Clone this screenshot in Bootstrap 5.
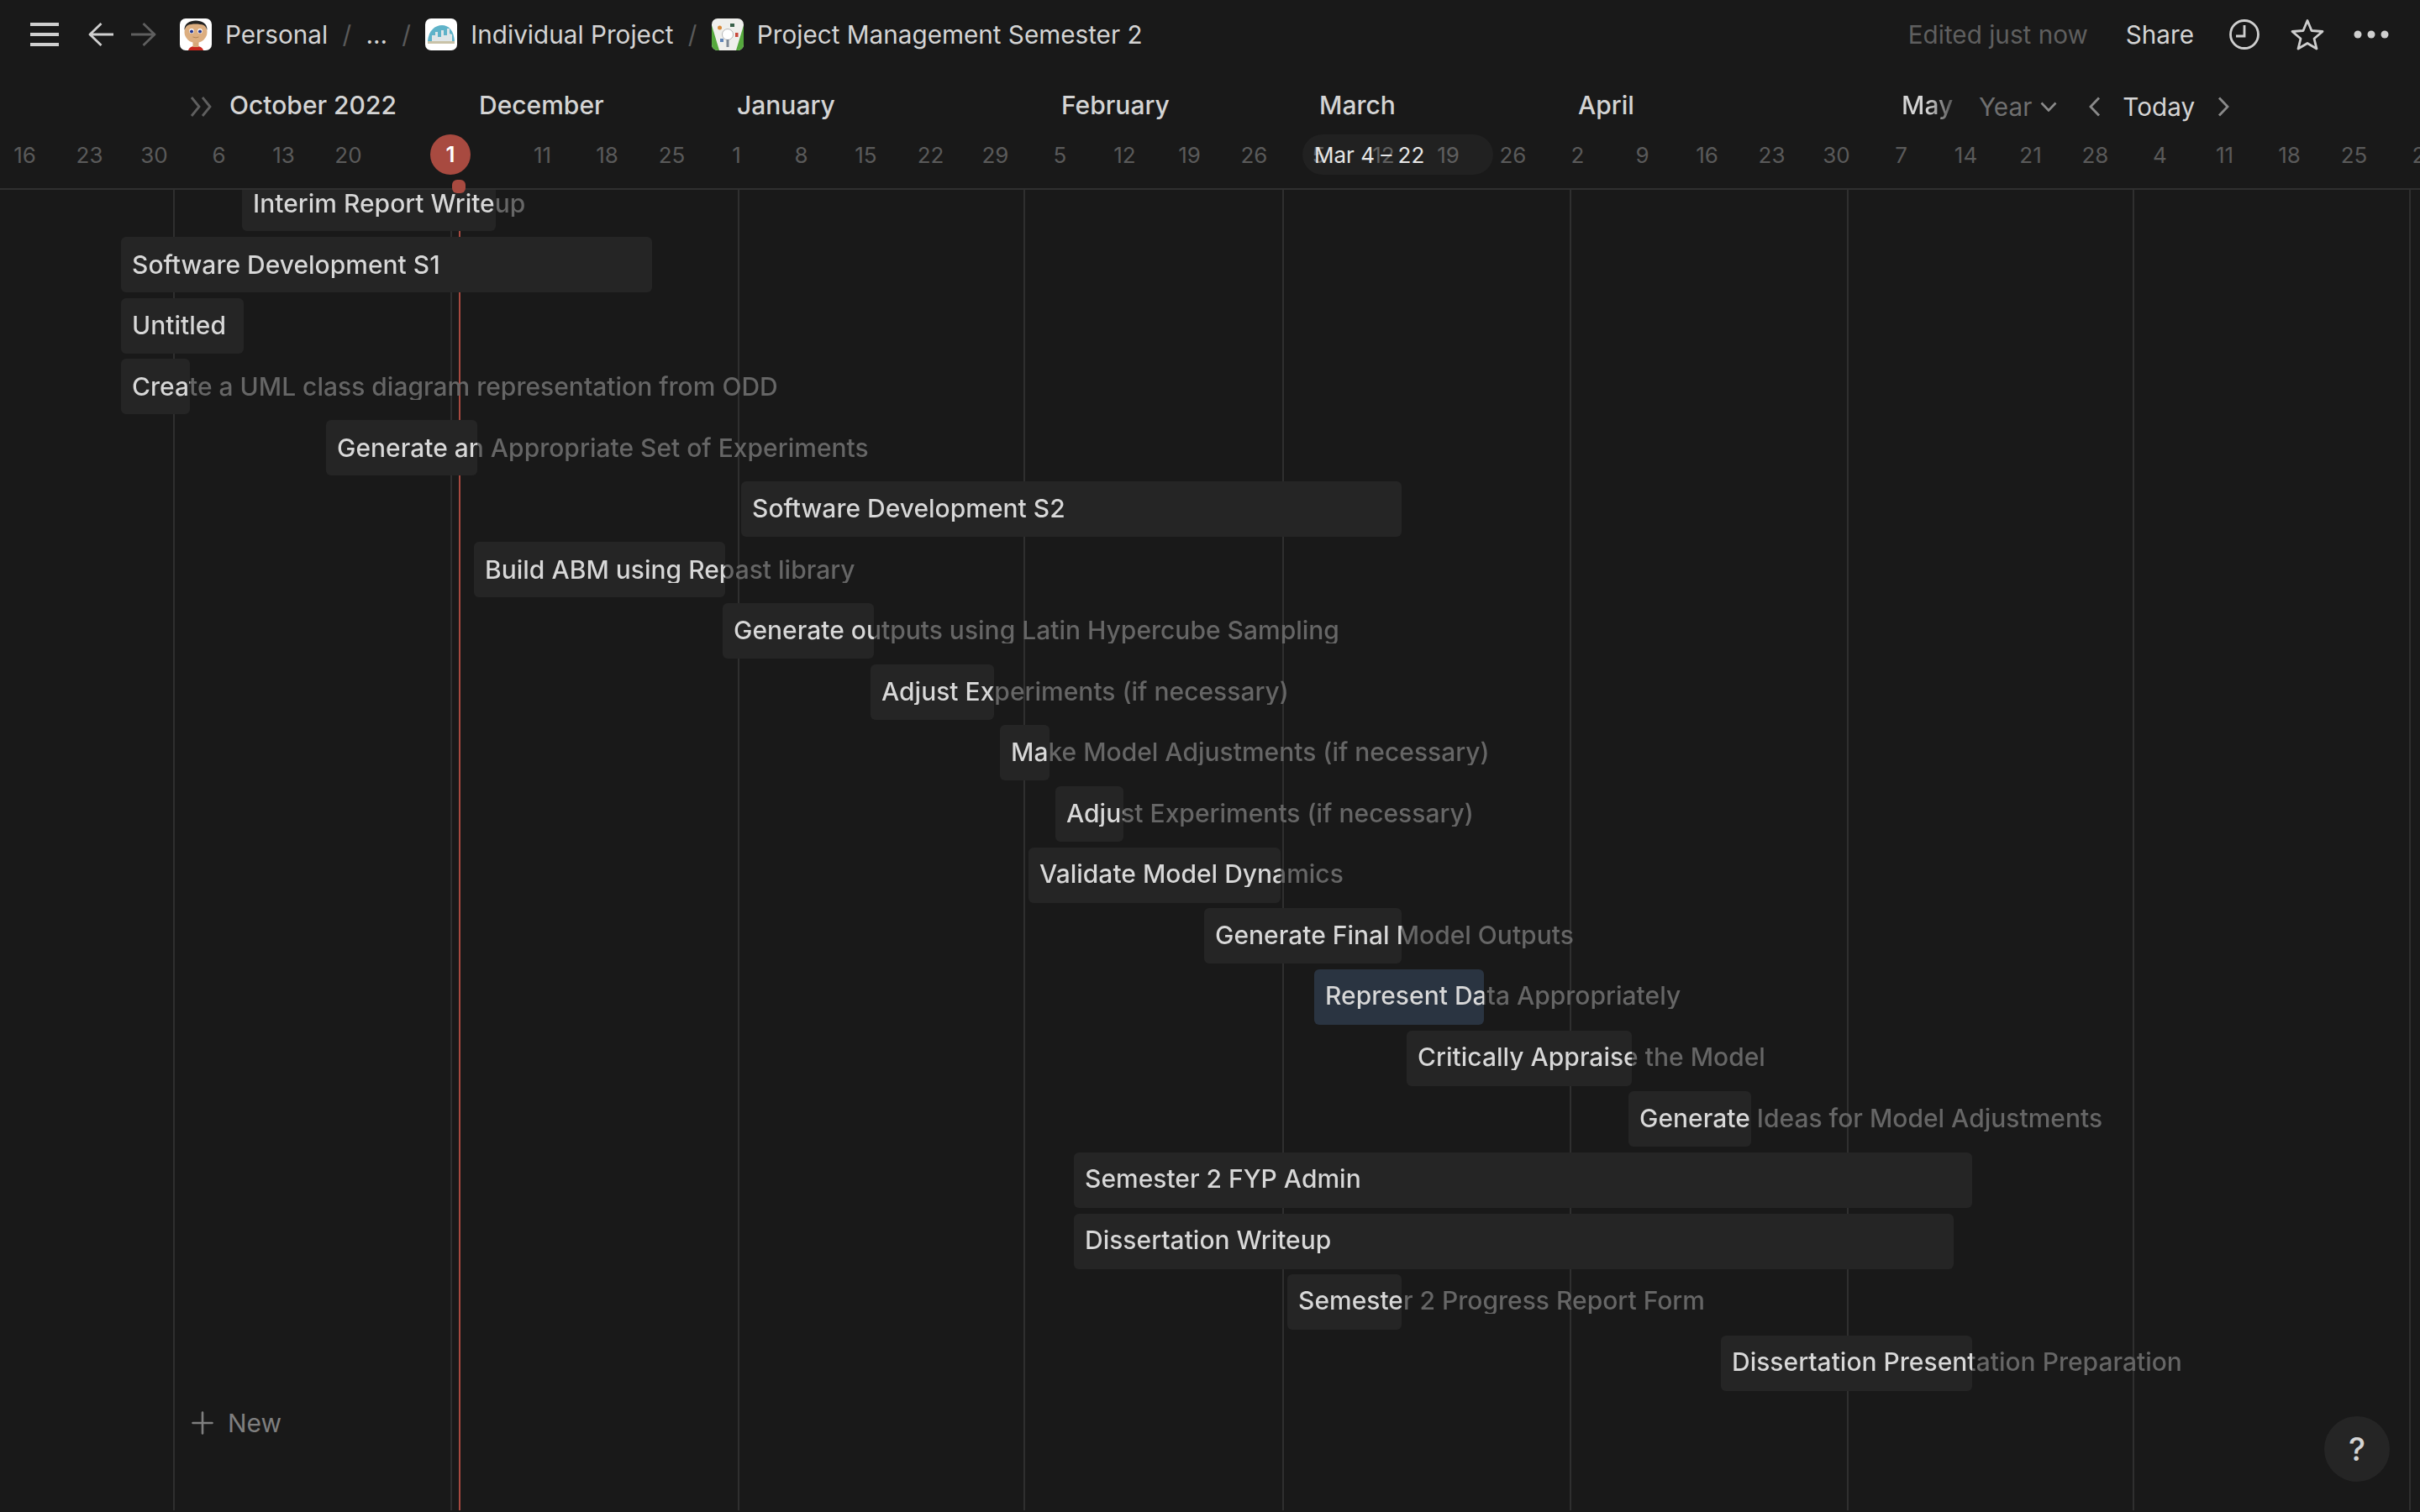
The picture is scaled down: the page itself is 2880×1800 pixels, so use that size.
<!DOCTYPE html>
<html lang="en">

<head>
    <meta charset="UTF-8">
    <meta name="viewport" content="width=device-width, initial-scale=1.0">
    <title>Project Management Semester 2</title>
    <link href="https://cdn.jsdelivr.net/npm/bootstrap@5.3.2/dist/css/bootstrap.min.css" rel="stylesheet">
    <style>
        html, body { height: 100%; }
        body {
            background: #191919;
            color: #d4d4d4;
            font-family: Inter, "Liberation Sans", sans-serif;
            font-size: 29.7px;
            overflow: hidden;
        }
        .app-shell { position: relative; width: 2880px; height: 1798px; overflow: hidden; }
        /* top bar */
        .topbar { height: 82px; padding-left: 36px; padding-right: 37px; }
        .topbar svg { display: block; flex: none; }
        .crumb-icon { width: 38px; height: 38px; border-radius: 7px; overflow: hidden; flex: none; }
        .crumb-sep { color: #5a5a5a; margin: 0 17.25px; }
        .crumb-text { margin-left: 16px; white-space: nowrap; }
        .edited { color: #5f5f5f; margin-right: 45px; white-space: nowrap; }
        .gap-hamb { margin-left: 35px; }
        .gap-fwd { margin-left: 21px; }
        .gap-avatar { margin-left: 28px; }
        .gap-share { margin-right: 42px; }
        .gap-star { margin-left: 37px; }
        .gap-dots { margin-left: 35px; }
        /* months and dates */
        .tl-head { position: relative; z-index: 2; height: 144px; border-bottom: 2px solid #2f2f2f; background: #191919; }
        .skip-back { left: 226px; top: 33px; }
        .month-label { position: absolute; top: 24px; font-weight: 500; font-size: 30px; line-height: 38px; color: #d4d4d4; white-space: nowrap; }
        .month-fade {
            background: linear-gradient(90deg, #d4d4d4 30px, #5f5f5f 58px);
            -webkit-background-clip: text;
            background-clip: text;
            color: transparent;
        }
        .tl-controls { position: absolute; top: 24px; left: 2355px; height: 42px; }
        .tl-controls .ctl-year { color: #6f6f6f; }
        .tl-controls .ctl-today { color: #d4d4d4; margin-left: 25px; }
        .gap-chev1 { margin-left: 10px; }
        .gap-chev2 { margin-left: 37px; }
        .gap-chev3 { margin-left: 26px; }
        .date-row { position: absolute; top: 79px; left: -9px; height: 48px; }
        .date-cell { width: 77px; text-align: center; font-size: 26px; line-height: 48px; color: #5a5a5a; flex: none; }
        .today-dot { position: absolute; top: 78px; left: 512px; width: 48px; height: 48px; border-radius: 50%; background: #a84a40; color: #fff; font-size: 26px; font-weight: 600; line-height: 48px; text-align: center; }
        .today-tick { position: absolute; top: 132px; left: 538px; width: 16px; height: 16px; border-radius: 6px; background: #a84a40; z-index: 5; }
        .range-pill { position: absolute; top: 78px; left: 1550px; width: 227px; height: 48px; border-radius: 24px; background: rgba(255, 255, 255, .035); color: #e6e6e6; font-size: 26px; line-height: 50px; padding-left: 14px; white-space: nowrap; }
        /* canvas */
        .tl-canvas { position: relative; height: 1572px; }
        .grid-line { position: absolute; top: 0; bottom: 0; width: 2px; background: #2f2f2f; }
        .now-line { position: absolute; top: 0; bottom: 0; left: 546px; width: 2px; background: #a84a40; }
        .gantt-bar { position: absolute; height: 66px; border-radius: 6px; background: #252525; }
        .gantt-bar.is-active { background: #2a3441; }
        .gantt-label {
            position: absolute;
            height: 32px;
            line-height: 32px;
            font-weight: 500;
            font-size: 30px;
            white-space: nowrap;
            background: linear-gradient(90deg, #d8d8d8 var(--cut), #666 var(--cut));
            -webkit-background-clip: text;
            background-clip: text;
            color: transparent;
        }
        .new-row { position: absolute; left: 228px; top: 1448px; color: #7f7f7f; font-size: 30px; line-height: 40px; gap: 17px; }
        .help-btn { position: absolute; left: 2766px; top: 1686px; width: 78px; height: 78px; border-radius: 50%; background: #252525; color: #d4d4d4; font-size: 38px; font-weight: 500; z-index: 6; }
    </style>
</head>

<body>
    <div class="app-shell">
        <!-- Barre du haut -->
        <div class="topbar d-flex align-items-center">
            <svg width="34" height="28" viewBox="0 0 34 28" fill="#cfcfcf"><rect width="34" height="4"/><rect y="12" width="34" height="4"/><rect y="24" width="34" height="4"/></svg>
            <svg class="gap-hamb" width="30" height="28" viewBox="0 0 30 28" fill="none" stroke="#cfcfcf" stroke-width="2.800" stroke-linejoin="round"><path d="M30 14H2M15.500 1 2 14l13.500 13"/></svg>
            <svg class="gap-fwd" width="30" height="28" viewBox="0 0 30 28" fill="none" stroke="#5f5f5f" stroke-width="2.800" stroke-linejoin="round"><path d="M0 14H28M14.500 1 28 14 14.500 27"/></svg>

            <div class="crumb-icon gap-avatar">
                <svg width="38" height="38" viewBox="0 0 38 38"><rect width="38" height="38" fill="#fff"/><path d="M10 38q1-4 6-5h6q5 1 6 5z" fill="#c8281e"/><rect x="15.500" y="24" width="7" height="10" fill="#d8a878"/><ellipse cx="19" cy="16" rx="13.500" ry="13" fill="#dcae80"/><path d="M5.500 14C5 6 12 2.500 19 2.500S33 6 32.500 14c-1-3-2-5-4-6-5-2-15-2-19 0-2 1-3 3-4 6z" fill="#222"/><ellipse cx="14" cy="15" rx="2.800" ry="3" fill="#fff"/><ellipse cx="24" cy="15" rx="2.800" ry="3" fill="#fff"/><circle cx="14" cy="15.500" r="2" fill="#23358f"/><circle cx="24" cy="15.500" r="2" fill="#23358f"/><path d="M15.500 22q3.500 1.800 7 0" stroke="#b08558" fill="none"/></svg>
            </div>
            <span class="crumb-text">Personal</span>
            <span class="crumb-sep">/</span>
            <span>...</span>
            <span class="crumb-sep">/</span>
            <div class="crumb-icon">
                <svg width="38" height="38" viewBox="0 0 38 38"><rect width="38" height="38" fill="#fff"/><path d="M3 27C4 14 12 8 20 8s14 6 15 19z" fill="#5fb3c9"/><path d="M8 27v-7h4v-4h3v6h4v-8h3v6h4v-8h3v6l3 1v8z" fill="#dfe6e8"/><path d="M3 27h32v3H3z" fill="#c9c2a8"/></svg>
            </div>
            <span class="crumb-text">Individual Project</span>
            <span class="crumb-sep">/</span>
            <div class="crumb-icon">
                <svg width="38" height="38" viewBox="0 0 38 38"><rect width="38" height="38" fill="#efefec"/><path d="M0 8 9 38H0zM38 8 29 38h9z" fill="#55a83d"/><circle cx="19" cy="19" r="6.500" fill="#fff" stroke="#b5b5b5"/><rect x="17.500" y="25" width="3" height="9" fill="#7c8794"/><circle cx="9.500" cy="11" r="2.500" fill="#d98a3a"/><rect x="22" y="6" width="5" height="4" fill="#39604a"/><rect x="28" y="17" width="3.500" height="5" fill="#c8483a"/><rect x="10" y="24" width="4" height="4" fill="#5f84b8"/></svg>
            </div>
            <span class="crumb-text">Project Management Semester 2</span>

            <div class="ms-auto d-flex align-items-center">
                <span class="edited">Edited just now</span>
                <span class="text-nowrap gap-share">Share</span>
                <svg width="36" height="36" viewBox="0 0 36 36" fill="none" stroke="#cfcfcf" stroke-width="2.800"><circle cx="18" cy="18" r="16.500"/><path d="M18 7v13H8"/></svg>
                <svg class="gap-star" width="40" height="38" viewBox="0 0 40 38" fill="none" stroke="#cfcfcf" stroke-width="2.800" stroke-linejoin="round"><path d="M20 2.500 25 14.500 38 15.500 28 24 31 36 20 29.500 9 36 12 24 2 15.500 15 14.500z"/></svg>
                <svg class="gap-dots" width="42" height="10" viewBox="0 0 42 10" fill="#cfcfcf"><circle cx="5" cy="5" r="4.500"/><circle cx="21" cy="5" r="4.500"/><circle cx="37" cy="5" r="4.500"/></svg>
            </div>
        </div>

        <!-- Mois et dates -->
        <div class="tl-head">
            <svg class="position-absolute skip-back" width="28" height="24" viewBox="0 0 28 24" fill="none" stroke="#5f5f5f" stroke-width="2.800"><path d="M2 1l9 11-9 11M15 1l9 11-9 11"/></svg>
            <div id="monthLabels"></div>
            <div class="tl-controls d-flex align-items-center">
                <span class="ctl-year">Year</span>
                <svg class="gap-chev1" width="20" height="12" viewBox="0 0 20 12" fill="none" stroke="#8a8a8a" stroke-width="2.600"><path d="M1.500 1.500 10 10.500l8.500-9"/></svg>
                <svg class="gap-chev2" width="16" height="24" viewBox="0 0 16 24" fill="none" stroke="#8a8a8a" stroke-width="2.800"><path d="M13 1.500 3 12l10 10.500"/></svg>
                <span class="ctl-today">Today</span>
                <svg class="gap-chev3" width="16" height="24" viewBox="0 0 16 24" fill="none" stroke="#8a8a8a" stroke-width="2.800"><path d="M3 1.500 13 12 3 22.500"/></svg>
            </div>
            <div class="date-row d-flex" id="dateRow"></div>
            <div class="today-dot">1</div>
            <div class="today-tick"></div>
            <div class="range-pill">Mar 4 – 22</div>
        </div>

        <!-- Diagramme de Gantt -->
        <div class="tl-canvas" id="ganttCanvas">
            <div class="new-row d-flex align-items-center">
                <svg width="26" height="28" viewBox="0 0 26 28" stroke="#7f7f7f" stroke-width="2.600" stroke-linecap="round"><path d="M13 1.500v25M1.500 14h23"/></svg>
                <span>New</span>
            </div>
        </div>

        <div class="help-btn d-flex align-items-center justify-content-center">?</div>
    </div>

    <script>
        const months = [["October 2022", 273], ["December", 570], ["January", 877], ["February", 1263], ["March", 1570], ["April", 1878], ["May", 2263]];
        const dates = [16, 23, 30, 6, 13, 20, "", "", 11, 18, 25, 1, 8, 15, 22, 29, 5, 12, 19, 26, 5, 12, 19, 26, 2, 9, 16, 23, 30, 7, 14, 21, 28, 4, 11, 18, 25, 2];
        const gridLines = [207, 537, 879, 1219, 1527, 1869, 2199, 2539, 2868];
        // [nom, gauche, droite] par ligne du diagramme
        const tasks = [
            ["Interim Report Writeup", 288, 590],
            ["Software Development S1", 144, 776],
            ["Untitled", 144, 290],
            ["Create a UML class diagram representation from ODD", 144, 226],
            ["Generate an Appropriate Set of Experiments", 388, 568],
            ["Software Development S2", 882, 1668],
            ["Build ABM using Repast library", 564, 863],
            ["Generate outputs using Latin Hypercube Sampling", 860, 1040],
            ["Adjust Experiments (if necessary)", 1036, 1183],
            ["Make Model Adjustments (if necessary)", 1190, 1249],
            ["Adjust Experiments (if necessary)", 1256, 1337],
            ["Validate Model Dynamics", 1224, 1524],
            ["Generate Final Model Outputs", 1433, 1668],
            ["Represent Data Appropriately", 1564, 1766],
            ["Critically Appraise the Model", 1674, 1942],
            ["Generate Ideas for Model Adjustments", 1938, 2084],
            ["Semester 2 FYP Admin", 1278, 2347],
            ["Dissertation Writeup", 1278, 2325],
            ["Semester 2 Progress Report Form", 1532, 1668],
            ["Dissertation Presentation Preparation", 2048, 2347]
        ];

        const head = document.getElementById("monthLabels");
        months.forEach(([name, x]) => {
            const fade = name === "May" ? " month-fade" : "";
            head.innerHTML += `<span class="month-label${fade}" style="left:${x}px">${name}</span>`;
        });

        const dateRow = document.getElementById("dateRow");
        dates.forEach(d => { dateRow.innerHTML += `<div class="date-cell">${d}</div>`; });

        const canvas = document.getElementById("ganttCanvas");
        let html = "";
        gridLines.forEach(x => { html += `<div class="grid-line" style="left:${x - 1}px"></div>`; });
        html += `<div class="now-line"></div>`;
        tasks.forEach(([name, left, right], i) => {
            const top = 56 + (i - 1) * 72.67;
            const labelTop = 0.33 + i * 72.55;
            const active = name.startsWith("Represent") ? " is-active" : "";
            html += `<div class="gantt-bar${active}" style="left:${left}px;top:${top}px;width:${right - left}px"></div>`;
            html += `<div class="gantt-label" style="left:${left + 13}px;top:${labelTop}px;--cut:${right - left - 13}px">${name}</div>`;
        });
        canvas.insertAdjacentHTML("afterbegin", html);
    </script>
    <script src="https://cdn.jsdelivr.net/npm/bootstrap@5.3.2/dist/js/bootstrap.bundle.min.js"></script>
</body>

</html>
